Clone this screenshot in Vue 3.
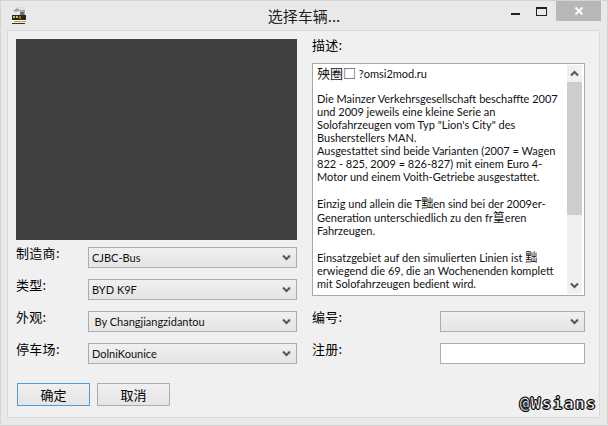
<script setup>
const selects = [
  { label: '制造商:', value: 'CJBC-Bus' },
  { label: '类型:', value: 'BYD K9F' },
  { label: '外观:', value: 'By Changjiangzidantou', indent: true },
  { label: '停车场:', value: 'DolniKounice' },
]
</script>

<template>
  <div class="window">
    <header class="titlebar">
      <svg class="app-icon" width="16" height="17" viewBox="0 0 16 17">
        <path d="M2 4l4-3 4-1 3 1 1 3v4h-4l1-2-2-2-4 1z" fill="#a4a4a4" />
        <path d="M6 1l4-1 3 1 1 2-5 0z" fill="#e2e2e2" />
        <path d="M9 5h4v3H9z" fill="#6e6e6e" />
        <rect x="1" y="8" width="14" height="5" fill="#2c2a1c" />
        <rect x="2" y="9" width="2" height="2" fill="#d8b860" />
        <rect x="5" y="9" width="2" height="2" fill="#d8b860" />
        <rect x="8" y="9" width="2" height="3" fill="#8a7a40" />
        <rect x="1" y="13" width="14" height="2" fill="#fff" />
        <rect x="3" y="14" width="12" height="1" fill="#c9a23a" />
        <rect x="1" y="16" width="13" height="1" fill="#333" />
      </svg>
      <div class="title">选择车辆...</div>
      <div class="controls">
        <div class="ctl"><span class="min"></span></div>
        <div class="ctl"><span class="max"></span></div>
        <div class="close">
          <svg width="10" height="10" viewBox="0 0 10 10"><path d="M1.5 1.5l7 7M8.5 1.5l-7 7" stroke="#fff" stroke-width="1.8" /></svg>
        </div>
      </div>
    </header>

    <main class="client">
      <section class="left">
        <div class="preview"></div>
        <div class="rows">
          <div v-for="s in selects" :key="s.label" class="row">
            <span class="label">{{ s.label }}</span>
            <div class="select wide">
              <span :class="{ indent: s.indent }">{{ s.value }}</span>
              <svg class="chev" width="9" height="7" viewBox="0 0 9 7"><path d="M1 1.5l3.5 3.5L8 1.5" fill="none" stroke="#555" stroke-width="2" /></svg>
            </div>
          </div>
        </div>
        <div class="buttons">
          <button class="btn default">确定</button>
          <button class="btn">取消</button>
        </div>
      </section>

      <section class="right">
        <div class="label desc">描述:</div>
        <div class="memo">
          <div class="memo-text">
            <p class="first"><span class="cjk big">殃圈□</span> ?omsi2mod.ru</p>
            <p>Die Mainzer Verkehrsgesellschaft beschaffte 2007<br />und 2009 jeweils eine kleine Serie an<br />Solofahrzeugen vom Typ "Lion's City" des<br />Busherstellers MAN.<br />Ausgestattet sind beide Varianten (2007 = Wagen<br />822 - 825, 2009 = 826-827) mit einem Euro 4-<br />Motor und einem Voith-Getriebe ausgestattet.</p>
            <p>Einzig und allein die T<span class="cjk">黜</span>en sind bei der 2009er-<br />Generation unterschiedlich zu den fr<span class="cjk">篁</span>eren<br />Fahrzeugen.</p>
            <p>Einsatzgebiet auf den simulierten Linien ist <span class="cjk">黜</span><br />erwiegend die 69, die an Wochenenden komplett<br />mit Solofahrzeugen bedient wird.</p>
          </div>
          <div class="scrollbar">
            <svg width="9" height="7" viewBox="0 0 9 7"><path d="M1 5.5l3.5-3.5L8 5.5" fill="none" stroke="#555" stroke-width="2" /></svg>
            <div class="track"><div class="thumb"></div></div>
            <svg width="9" height="7" viewBox="0 0 9 7"><path d="M1 1.5l3.5 3.5L8 1.5" fill="none" stroke="#555" stroke-width="2" /></svg>
          </div>
        </div>
        <div class="rows right-rows">
          <div class="row between">
            <span class="label">编号:</span>
            <div class="select narrow">
              <span></span>
              <svg class="chev" width="9" height="7" viewBox="0 0 9 7"><path d="M1 1.5l3.5 3.5L8 1.5" fill="none" stroke="#555" stroke-width="2" /></svg>
            </div>
          </div>
          <div class="row between">
            <span class="label">注册:</span>
            <div class="input narrow"></div>
          </div>
        </div>
        <div class="watermark">@Wsians</div>
      </section>
    </main>
  </div>
</template>

<style scoped>
.window {
  box-sizing: border-box;
  width: 608px;
  height: 426px;
  background: #e9e9e9;
  border: 1px solid #d4d4d4;
  display: flex;
  flex-direction: column;
  font-family: Lato, "Noto Sans CJK SC", sans-serif;
  color: #000;
  overflow: hidden;
}
.titlebar {
  height: 29px;
  flex: none;
  display: flex;
  position: relative;
  padding-left: 10px;
  padding-top: 6px;
  box-sizing: border-box;
}
.app-icon { flex: none; }
.title {
  position: absolute;
  left: 0;
  right: 0;
  top: 5px;
  text-align: center;
  font: 15px/20px "Noto Sans CJK SC", sans-serif;
  color: #222;
}
.controls {
  position: absolute;
  right: 6px;
  top: 0;
  display: flex;
}
.ctl {
  width: 26px;
  height: 20px;
  position: relative;
}
.min {
  position: absolute;
  left: 7px;
  top: 12px;
  width: 9px;
  height: 2px;
  background: #222;
}
.max {
  position: absolute;
  left: 6px;
  top: 6px;
  width: 9px;
  height: 6px;
  border: 1px solid #222;
  border-top-width: 2px;
}
.close {
  width: 45px;
  height: 20px;
  background: #b7b7b7;
  display: flex;
  align-items: center;
  justify-content: center;
}
.client {
  flex: 1;
  margin: 0 7px 7px 6px;
  border: 1px solid #d9d9d9;
  background: #f0f0f0;
  display: flex;
  gap: 15px;
  padding: 8px 0 0 8px;
  box-sizing: border-box;
}
.left { width: 281px; flex: none; }
.right { width: 273px; flex: none; position: relative; }
.preview { height: 201px; background: #404040; }
.rows { margin-top: 7px; display: flex; flex-direction: column; gap: 11px; }
.row { display: flex; height: 21px; }
.between { justify-content: space-between; }
.label {
  font: 13px/16px "Noto Sans CJK SC", sans-serif;
  letter-spacing: 0.3px;
  width: 72px;
  margin-top: -2px;
  flex: none;
}
.select {
  box-sizing: border-box;
  height: 21px;
  border: 1px solid #acacac;
  background: linear-gradient(#f0f0f0, #e5e5e5);
  display: flex;
  align-items: center;
  justify-content: space-between;
  padding: 0 5px 0 3px;
  font-size: 11px;
  color: #111;
}
.wide { width: 209px; }
.narrow { width: 145px; }
.indent { margin-left: 2.5px; }
.input {
  box-sizing: border-box;
  height: 21px;
  border: 1px solid #acacac;
  background: #fff;
}
.buttons { display: flex; gap: 7px; margin: 19px 0 0 1px; }
.btn {
  width: 73px;
  height: 23px;
  box-sizing: border-box;
  background: linear-gradient(#f0f0f0, #e5e5e5);
  border: 1px solid #adadad;
  font: 13px/16px "Noto Sans CJK SC", sans-serif;
  padding: 0;
  color: #000;
}
.default { border-color: #4d9ddb; }
.desc { height: 16px; margin: -2px 0 10px; }
.memo {
  box-sizing: border-box;
  height: 233px;
  border: 1px solid #a9a9a9;
  background: #fff;
  display: flex;
  overflow: hidden;
}
.memo-text {
  flex: 1;
  min-width: 0;
  padding: 2px 0 0 4px;
  font-size: 11px;
  line-height: 13px;
  color: #111;
  white-space: nowrap;
}
.memo-text p { margin: 0 0 13px; }
.memo-text .first { margin-bottom: 13px; height: 13px; }
.cjk { font-family: "Noto Sans CJK SC", sans-serif; font-size: 12px; }
.big { font-size: 13px; }
.scrollbar {
  width: 15px;
  flex: none;
  margin: 1px 2px 1px 0;
  background: #f0f0f0;
  display: flex;
  flex-direction: column;
  align-items: center;
}
.scrollbar svg { flex: none; margin: 5px 0; }
.track { flex: 1; width: 100%; margin-top: 0; }
.thumb { height: 133px; background: #cdcdcd; }
.right-rows { margin-top: 15px; }
.right-rows .label { width: auto; }
.watermark {
  position: absolute;
  right: -12px;
  top: 357px;
  font: bold 16px/16px "DejaVu Sans Mono", monospace;
  letter-spacing: 1.4px;
  color: #fff;
  -webkit-text-stroke: 0.5px #000;
  text-shadow: 1px 0 #000, -1px 0 #000, 0 1px #000, 0 -1px #000;
}
</style>
